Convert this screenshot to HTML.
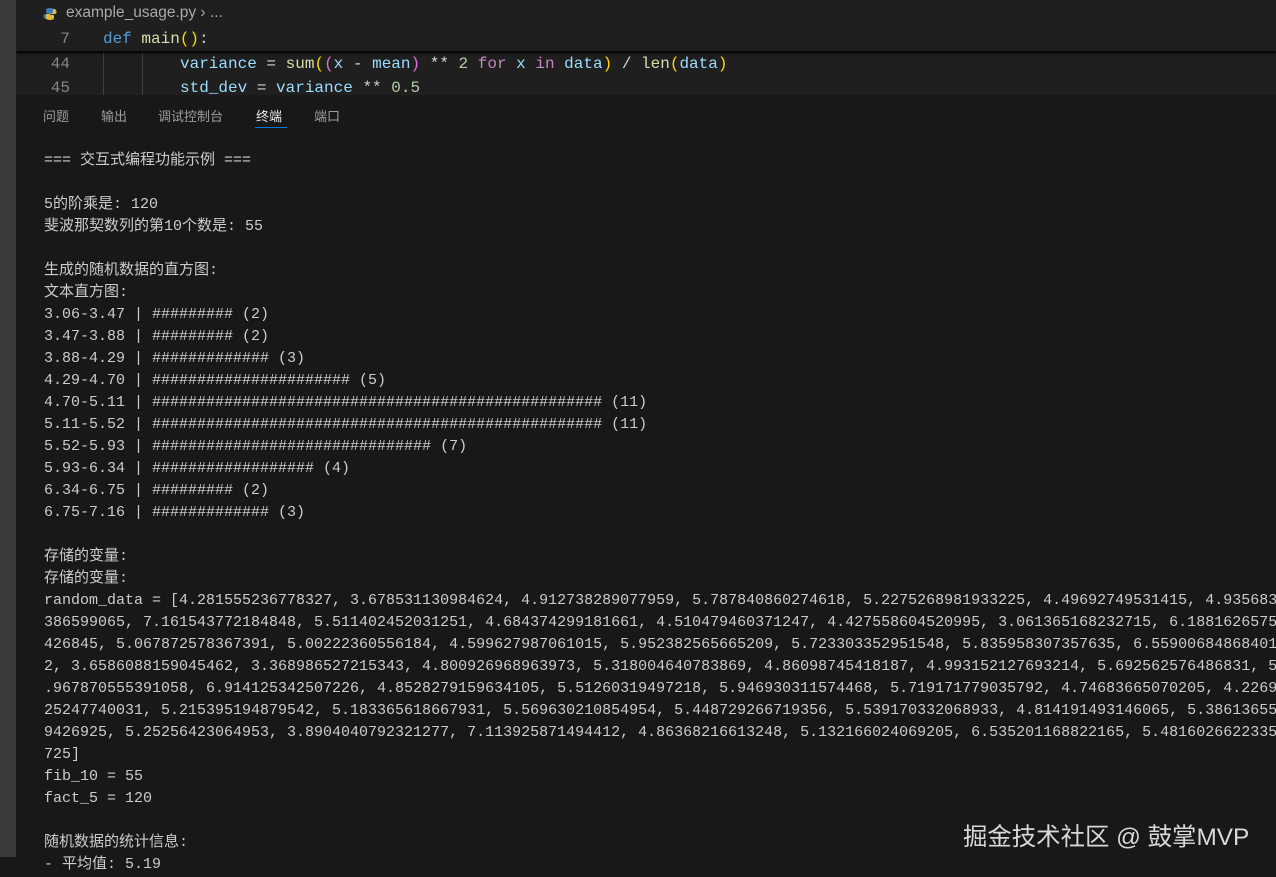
<!DOCTYPE html>
<html><head><meta charset="utf-8"><style>
html,body{margin:0;padding:0;width:1276px;height:877px;overflow:hidden;background:#181818;}
body{position:relative;font-family:"Liberation Mono","Noto Sans CJK SC",monospace;}
.strip{position:absolute;left:0;top:0;width:16px;height:857px;background:#3a3a3a;}
.editor{position:absolute;left:16px;top:0;width:1260px;height:95px;background:#1f1f1f;overflow:hidden;}
.bc{position:absolute;left:50px;top:4px;font:15.5px "Liberation Sans","Noto Sans CJK SC",sans-serif;color:#a9a9a9;}
.code{position:absolute;font-size:16px;white-space:pre;color:#9cdcfe;}
.ln{position:absolute;font-size:16px;color:#858585;width:60px;text-align:right;}
.sticky{position:absolute;left:0;top:0;width:1260px;height:51px;background:#1f1f1f;box-shadow:0 2px 3px #000;}
.tabs{position:absolute;top:106px;font:13px "Liberation Sans","Noto Sans CJK SC",sans-serif;color:#9d9d9d;}
.term{position:absolute;left:44px;top:150px;font-size:15px;line-height:22px;color:#cccccc;white-space:pre;}
.wm{position:absolute;left:963px;top:818px;font:24.4px "Liberation Sans","Noto Sans CJK SC",sans-serif;color:#d8d8d8;}
</style></head><body>
<div class="strip"></div>
<div class="editor">
 <div class="ln" style="left:-6px;top:55px">44</div>
 <div class="ln" style="left:-6px;top:79px">45</div>
 <div style="position:absolute;left:87px;top:51px;width:1px;height:44px;background:#404040"></div>
 <div style="position:absolute;left:126px;top:51px;width:1px;height:44px;background:#404040"></div>
 <div class="code" style="left:164px;top:55px">variance <span style="color:#d4d4d4">=</span> <span style="color:#dcdcaa">sum</span><span style="color:#ffd700">(</span><span style="color:#da70d6">(</span>x <span style="color:#d4d4d4">-</span> mean<span style="color:#da70d6">)</span> <span style="color:#d4d4d4">**</span> <span style="color:#b5cea8">2</span> <span style="color:#c586c0">for</span> x <span style="color:#c586c0">in</span> data<span style="color:#ffd700">)</span> <span style="color:#d4d4d4">/</span> <span style="color:#dcdcaa">len</span><span style="color:#ffd700">(</span>data<span style="color:#ffd700">)</span></div>
 <div class="code" style="left:164px;top:79px">std_dev <span style="color:#d4d4d4">=</span> variance <span style="color:#d4d4d4">**</span> <span style="color:#b5cea8">0.5</span></div>
 <div class="sticky">
  <svg style="position:absolute;left:27px;top:7px" width="14" height="14" viewBox="0 0 14 14"><path d="M7 1C3 1 3 2.5 3 4v2h4v1H2C0.5 7 0.5 9 0.5 9.5S1 12 2.5 12H4v-2.5C4 8 5 7.5 6 7.5h3c1 0 2-1 2-2V3C11 1.5 9 1 7 1z" fill="#3d7ab8"/><path d="M7 13c4 0 4-1.5 4-3V8H7V7h5c1.5 0 1.5-2 1.5-2.5S13 2 11.5 2H10v2.5C10 6 9 6.5 8 6.5H5c-1 0-2 1-2 2V11c0 1.5 2 2 4 2z" fill="#f0c93b" opacity=".9"/></svg>
  <div class="bc">example_usage.py <span>›</span> ...</div>
  <div class="ln" style="left:-6px;top:30px">7</div>
  <div class="code" style="left:87px;top:30px"><span style="color:#569cd6">def</span> <span style="color:#dcdcaa">main</span><span style="color:#ffd700">()</span><span style="color:#d4d4d4">:</span></div>
 </div>
</div>
<div class="tabs" style="left:43px">问题</div>
<div class="tabs" style="left:101px">输出</div>
<div class="tabs" style="left:158px">调试控制台</div>
<div class="tabs" style="left:256px;color:#e7e7e7">终端</div>
<div style="position:absolute;left:255px;top:127px;width:32px;height:1px;background:#0078d4"></div>
<div class="tabs" style="left:314px">端口</div>
<div class="term">=== 交互式编程功能示例 ===

5的阶乘是: 120
斐波那契数列的第10个数是: 55

生成的随机数据的直方图:
文本直方图:
3.06-3.47 | ######### (2)
3.47-3.88 | ######### (2)
3.88-4.29 | ############# (3)
4.29-4.70 | ###################### (5)
4.70-5.11 | ################################################## (11)
5.11-5.52 | ################################################## (11)
5.52-5.93 | ############################### (7)
5.93-6.34 | ################## (4)
6.34-6.75 | ######### (2)
6.75-7.16 | ############# (3)

存储的变量:
存储的变量:
random_data = [4.281555236778327, 3.678531130984624, 4.912738289077959, 5.787840860274618, 5.2275268981933225, 4.49692749531415, 4.935683
386599065, 7.161543772184848, 5.511402452031251, 4.684374299181661, 4.510479460371247, 4.427558604520995, 3.061365168232715, 6.1881626575
426845, 5.067872578367391, 5.00222360556184, 4.599627987061015, 5.952382565665209, 5.723303352951548, 5.835958307357635, 6.55900684868401
2, 3.6586088159045462, 3.368986527215343, 4.800926968963973, 5.318004640783869, 4.86098745418187, 4.993152127693214, 5.692562576486831, 5
.967870555391058, 6.914125342507226, 4.8528279159634105, 5.51260319497218, 5.946930311574468, 5.719171779035792, 4.74683665070205, 4.2269
25247740031, 5.215395194879542, 5.183365618667931, 5.569630210854954, 5.448729266719356, 5.539170332068933, 4.814191493146065, 5.38613655
9426925, 5.25256423064953, 3.8904040792321277, 7.113925871494412, 4.86368216613248, 5.132166024069205, 6.535201168822165, 5.4816026622335
725]
fib_10 = 55
fact_5 = 120

随机数据的统计信息:
- 平均值: 5.19
- 标准差: 1.02</div>
<div class="wm">掘金技术社区 @ 鼓掌MVP</div>
</body></html>
